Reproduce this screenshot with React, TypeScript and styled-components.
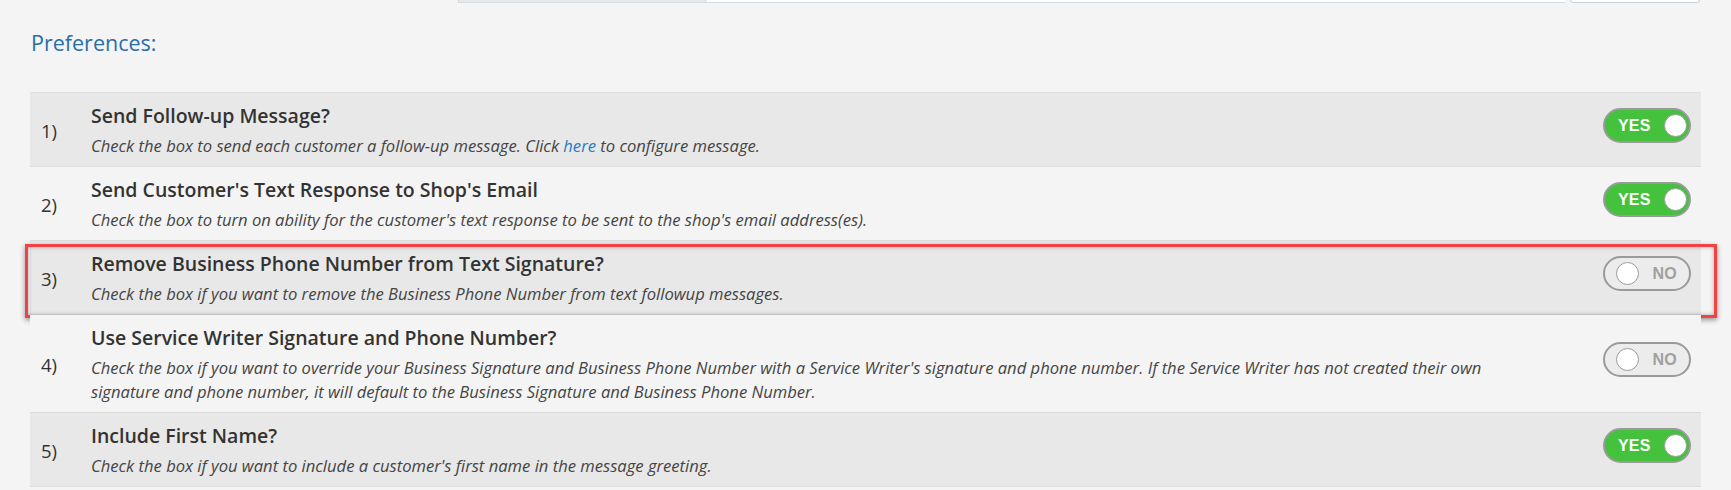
import React from "react";
import styled, { createGlobalStyle } from "styled-components";

const GlobalStyle = createGlobalStyle`
  html, body { margin: 0; padding: 0; background: #f4f4f4; }
  body { font-family: "Open Sans", "Liberation Sans", sans-serif; color: #333; }
  * { box-sizing: border-box; }
`;

const Page = styled.div`
  padding: 0 30px 0 30px;
  min-height: 490px;
`;

const TopStrip = styled.div`
  display: flex;
  height: 3px;
  margin-left: 428px;
`;

const AddonStub = styled.div`
  width: 249px;
  background: #e8e8e8;
  border-left: 1px solid #d8d8d8;
  border-bottom: 1px solid #d5dbe4;
`;

const InputStub = styled.div`
  width: 858px;
  background: #ffffff;
  border-bottom: 1px solid #d5dbe4;
`;

const ButtonStub = styled.div`
  width: 130px;
  margin-left: 5px;
  background: #ffffff;
  border: 1px solid #c9d2de;
  border-top: none;
  border-radius: 0 0 4px 4px;
`;

const Heading = styled.h2`
  margin: 27px 0 36px 1px;
  font-size: 21.5px;
  line-height: 26px;
  font-weight: 400;
  color: #2a6ea8;
`;

const List = styled.div`
  border-top: 1px solid #e0e0e0;
`;

const Row = styled.div<{ $shaded: boolean }>`
  position: relative;
  display: grid;
  grid-template-columns: 61px 1fr 98px;
  align-items: center;
  padding: 10px 0 8px 0;
  background: ${(p) => (p.$shaded ? "#e8e8e8" : "#f4f4f4")};
  border-bottom: 1px solid #dcdcdc;
`;

const Num = styled.div`
  padding-left: 11px;
  font-size: 18.5px;
  color: #333;
`;

const Body = styled.div`
  display: flex;
  flex-direction: column;
  gap: 5px;
  padding-right: 65px;
`;

const Title = styled.div`
  font-size: 19.5px;
  line-height: 26px;
  font-weight: 600;
  color: #333;
`;

const Desc = styled.div`
  font-size: 16.6px;
  line-height: 24px;
  font-style: italic;
  color: #444;

  a {
    color: #2a7ac0;
    text-decoration: none;
  }
`;

const ToggleWrap = styled.div`
  display: flex;
  justify-content: flex-end;
  padding-right: 10px;
  margin-bottom: 10px;
`;

const Toggle = styled.div<{ $on: boolean }>`
  width: 88px;
  height: 35px;
  border-radius: 18px;
  border: 2px solid #9a9a9a;
  background: ${(p) => (p.$on ? "#44c23d" : "#ececec")};
  display: flex;
  flex-direction: ${(p) => (p.$on ? "row" : "row-reverse")};
  align-items: center;
  justify-content: space-between;
  padding: ${(p) => (p.$on ? "0 2px 0 13px" : "0 12px 0 6px")};
`;

const ToggleLabel = styled.span<{ $on: boolean }>`
  font-family: "Liberation Sans", Arial, sans-serif;
  font-weight: 700;
  font-size: 16px;
  color: ${(p) => (p.$on ? "#ffffff" : "#a0a0a0")};
  letter-spacing: 0.2px;
`;

const Knob = styled.span`
  width: 23px;
  height: 23px;
  border-radius: 50%;
  background: #ffffff;
  border: 1px solid #9a9a9a;
  margin-left: 5px;
`;

const Highlight = styled.div`
  position: absolute;
  top: 3px;
  left: -5px;
  right: -16px;
  bottom: -4px;
  border: 3px solid #f04444;
  box-shadow: 0 2px 5px rgba(0, 0, 0, 0.4), inset 0 0 4px rgba(0, 0, 0, 0.3);
  pointer-events: none;
`;

type Pref = {
  title: string;
  desc: React.ReactNode;
  on: boolean;
  highlighted?: boolean;
};

const prefs: Pref[] = [
  {
    title: "Send Follow-up Message?",
    desc: (
      <>
        Check the box to send each customer a follow-up message. Click <a href="#">here</a> to configure message.
      </>
    ),
    on: true,
  },
  {
    title: "Send Customer's Text Response to Shop's Email",
    desc: "Check the box to turn on ability for the customer's text response to be sent to the shop's email address(es).",
    on: true,
  },
  {
    title: "Remove Business Phone Number from Text Signature?",
    desc: "Check the box if you want to remove the Business Phone Number from text followup messages.",
    on: false,
    highlighted: true,
  },
  {
    title: "Use Service Writer Signature and Phone Number?",
    desc: "Check the box if you want to override your Business Signature and Business Phone Number with a Service Writer's signature and phone number. If the Service Writer has not created their own signature and phone number, it will default to the Business Signature and Business Phone Number.",
    on: false,
  },
  {
    title: "Include First Name?",
    desc: "Check the box if you want to include a customer's first name in the message greeting.",
    on: true,
  },
];

export default function App() {
  return (
    <>
      <GlobalStyle />
      <Page>
        <TopStrip>
          <AddonStub />
          <InputStub />
          <ButtonStub />
        </TopStrip>
        <Heading>Preferences:</Heading>
        <List>
          {prefs.map((p, i) => (
            <Row key={i} $shaded={i % 2 === 0}>
              <Num>{i + 1})</Num>
              <Body>
                <Title>{p.title}</Title>
                <Desc>{p.desc}</Desc>
              </Body>
              <ToggleWrap>
                <Toggle $on={p.on}>
                  <ToggleLabel $on={p.on}>{p.on ? "YES" : "NO"}</ToggleLabel>
                  <Knob />
                </Toggle>
              </ToggleWrap>
              {p.highlighted && <Highlight />}
            </Row>
          ))}
        </List>
      </Page>
    </>
  );
}
